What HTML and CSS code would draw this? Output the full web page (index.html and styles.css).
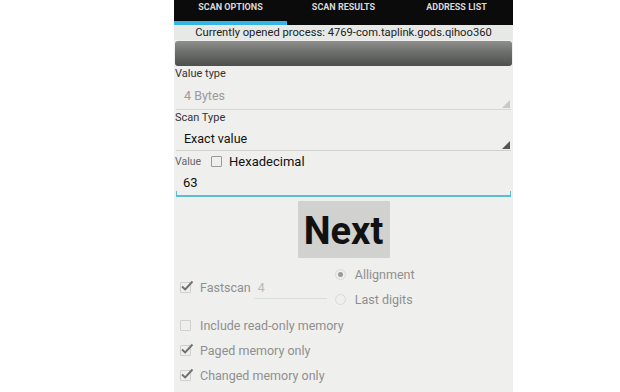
FILE: index.html
```html
<!DOCTYPE html>
<html lang="en">
<head>
    <meta charset="UTF-8">
    <meta name="viewport" content="width=device-width, initial-scale=1.0">
    <title>Scan Options</title>
    <link rel="stylesheet" href="styles.css">
</head>
<body>
    <div class="screen">
        <div class="tabs">
            <div class="tab active">SCAN OPTIONS</div>
            <div class="tab">SCAN RESULTS</div>
            <div class="tab">ADDRESS LIST</div>
        </div>

        <div class="process">Currently opened process: 4769-com.taplink.gods.qihoo360</div>
        <div class="process-button"></div>

        <div class="label label-type">Value type</div>
        <div class="spinner spinner-disabled">4 Bytes</div>

        <div class="label label-scan">Scan Type</div>
        <div class="spinner spinner-scan">Exact value</div>

        <div class="value-row">
            <span class="label">Value</span>
            <span class="box"></span>
            <span class="hex">Hexadecimal</span>
        </div>
        <div class="value-input">63</div>

        <div class="next-wrap">
            <button type="button" class="next-button">Next</button>
        </div>

        <div class="fast-row">
            <div class="fast-left">
                <span class="box checked">
                    <svg viewBox="0 0 14 14" width="14" height="14"><path d="M2 7.5 L5.2 10.5 L12.5 2.5" fill="none" stroke="#707070" stroke-width="1.9"/></svg>
                </span>
                <span class="option-text">Fastscan</span>
                <span class="fast-input">4</span>
            </div>
            <div class="radios">
                <div class="radio-row"><span class="radio selected"></span><span class="option-text">Allignment</span></div>
                <div class="radio-row"><span class="radio"></span><span class="option-text">Last digits</span></div>
            </div>
        </div>

        <div class="check-row">
            <span class="box"></span>
            <span class="option-text">Include read-only memory</span>
        </div>
        <div class="check-row">
            <span class="box checked">
                <svg viewBox="0 0 14 14" width="14" height="14"><path d="M2 7.5 L5.2 10.5 L12.5 2.5" fill="none" stroke="#707070" stroke-width="1.9"/></svg>
            </span>
            <span class="option-text">Paged memory only</span>
        </div>
        <div class="check-row">
            <span class="box checked">
                <svg viewBox="0 0 14 14" width="14" height="14"><path d="M2 7.5 L5.2 10.5 L12.5 2.5" fill="none" stroke="#707070" stroke-width="1.9"/></svg>
            </span>
            <span class="option-text">Changed memory only</span>
        </div>
    </div>
</body>
</html>
```

FILE: styles.css
```css
body {
    margin: 0;
    padding: 0;
    background-color: #fff;
    font-family: Roboto, "Liberation Sans", sans-serif;
}

.screen {
    margin-left: 174px;
    width: 339px;
    height: 392px;
    background-color: #efefed;
    display: flex;
    flex-direction: column;
    overflow: hidden;
}

/* tab bar */
.tabs {
    display: flex;
    height: 25px;
    background-color: #0b0b0b;
}

.tab {
    flex: 1;
    text-align: center;
    color: #d8d8d8;
    font-size: 9px;
    font-weight: bold;
    padding-top: 2px;
    line-height: 11px;
    box-sizing: border-box;
}

.tab.active {
    border-bottom: 4px solid #33b5e5;
}

.process {
    height: 15px;
    line-height: 16px;
    background-color: #e7e9e6;
    text-align: center;
    font-size: 11.2px;
    color: #222;
}

.process-button {
    height: 25px;
    margin: 1px 1px 0;
    border-radius: 3px;
    background: linear-gradient(#8f908d, #6d6f6b 45%, #4d4f4c);
}

/* form fields */
.label {
    font-size: 11px;
    color: #333;
    padding-left: 1px;
}

.label-type {
    height: 15px;
    line-height: 16px;
}

.label-scan {
    height: 16px;
    line-height: 16px;
}

.spinner {
    position: relative;
    margin: 0 2px;
    padding-left: 8px;
    font-size: 12.5px;
    border-bottom: 1px solid #d6d8d4;
}

.spinner::after {
    content: "";
    position: absolute;
    right: 1px;
    bottom: 1px;
    border-left: 8px solid transparent;
    border-bottom: 8px solid #555;
}

.spinner-disabled {
    height: 28px;
    line-height: 30px;
    color: #9a9a9a;
}

.spinner-disabled::after {
    border-bottom-color: #c8c8c6;
}

.spinner-scan {
    height: 24px;
    line-height: 26px;
    color: #111;
    border-bottom-color: #cfd0ce;
}

.value-row {
    height: 20px;
    display: flex;
    align-items: center;
}

.value-row .label {
    color: #666;
    font-size: 10.5px;
}

.value-row .box {
    margin-left: 10px;
    margin-right: 7px;
    border-color: #9a9a9a;
}

.hex {
    font-size: 13px;
    color: #111;
}

.value-input {
    position: relative;
    height: 24px;
    line-height: 24px;
    margin: 0 2px;
    padding-left: 7px;
    font-size: 13px;
    color: #111;
    border-bottom: 2px solid #5bbdd3;
}

.value-input::before,
.value-input::after {
    content: "";
    position: absolute;
    bottom: 0;
    width: 1px;
    height: 4px;
    background-color: #5bbdd3;
}

.value-input::before {
    left: 0;
}

.value-input::after {
    right: 0;
}

.next-wrap {
    display: flex;
    justify-content: center;
    padding-top: 4px;
}

.next-button {
    width: 92px;
    height: 57px;
    border: none;
    border-radius: 1px;
    background-color: #d1d1cf;
    font-family: Roboto, "Liberation Sans", sans-serif;
    font-size: 38px;
    font-weight: bold;
    color: #111;
    padding: 2px 0 0;
}

/* options */
.box {
    display: inline-flex;
    align-items: center;
    justify-content: center;
    width: 11px;
    height: 11px;
    border: 1px solid #cfcfcd;
    border-radius: 1px;
    box-sizing: border-box;
}

.box.checked svg {
    margin-left: 3px;
    margin-top: -3px;
    flex-shrink: 0;
}

.option-text {
    font-size: 12.5px;
    color: #8f8f8f;
}

.fast-row {
    display: flex;
    height: 51px;
    margin-top: 4px;
}

.fast-left {
    display: flex;
    align-items: center;
    padding-left: 6px;
}

.fast-left .option-text {
    margin-left: 9px;
}

.fast-input {
    width: 73px;
    margin-left: 3px;
    margin-top: 2px;
    padding-left: 4px;
    box-sizing: border-box;
    font-size: 12.5px;
    line-height: 20px;
    color: #b8b8b8;
    border-bottom: 1px solid #dcdcda;
}

.radios {
    margin-left: 8px;
    display: flex;
    flex-direction: column;
}

.radio-row {
    height: 25px;
    display: flex;
    align-items: center;
}

.radio-row .option-text {
    margin-left: 9px;
}

.radio {
    width: 11px;
    height: 11px;
    border-radius: 50%;
    border: 1px solid #dadad8;
    box-sizing: border-box;
    display: flex;
    align-items: center;
    justify-content: center;
}

.radio.selected::after {
    content: "";
    width: 5px;
    height: 5px;
    border-radius: 50%;
    background-color: #9a9a9a;
}

.check-row {
    height: 25px;
    display: flex;
    align-items: center;
    padding-left: 6px;
}

.check-row .option-text {
    margin-left: 9px;
}
```
